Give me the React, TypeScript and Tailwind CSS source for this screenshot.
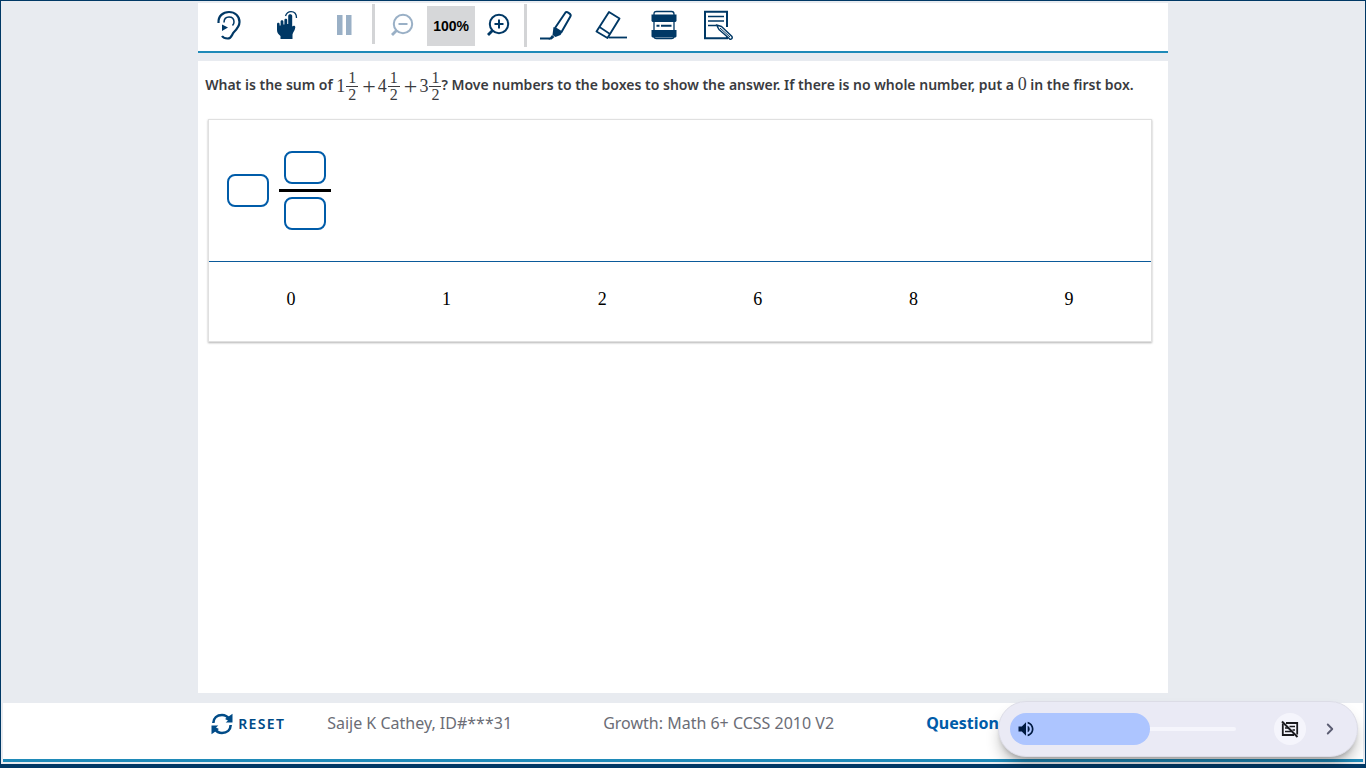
import { useState } from "react";
import type { ReactNode } from "react";
import { ChevronRight } from "lucide-react";
import { MdVolumeUp } from "react-icons/md";

const choices = ["0", "1", "2", "6", "8", "9"];

function EarIcon() {
  return (
    <svg width="32" height="32" viewBox="0 0 32 32" fill="none" stroke="currentColor">
      <path d="M5.500 14C5 7 10 3 16 3s10.500 4 10.500 10c0 4.500-2.500 7-5.500 10-2.500 2.500-2 6.500-6.500 6.500-3 0-4.500-1-5.500-2.500" strokeWidth="2.200" />
      <path d="M11 13.500c0-3.500 2-5.500 5-5.500s5 2 5 5c0 1.500-.5 2.500-1.500 3.500" strokeWidth="1.500" />
      <path d="M9 15.500l6 3-6 3.500z" fill="currentColor" stroke="none" />
    </svg>
  );
}

function TouchIcon() {
  return (
    <svg width="32" height="32" viewBox="0 0 32 32" fill="none">
      <path
        fill="currentColor"
        d="M6 15c0-1.700 2.600-1.700 2.600 0v1.500h1v-4c0-1.800 2.800-1.800 2.800 0v3h1V11c0-1.800 2.800-1.800 2.800 0v4h1V7c0-2.300 4-2.300 4 0v10.500c1-1.200 3.300-1.200 3.100.8-.2 2.500-1.500 4-2.300 5.700l-.5 1.500v4.500H9.500v-3C7.500 25.500 6 24 6 21z"
      />
      <path d="M14.500 7C15.500 4 17.500 2.700 20 2.700c3.500 0 5.500 2.500 5.500 6.300" stroke="currentColor" strokeWidth="1.300" />
    </svg>
  );
}

function PauseIcon() {
  return (
    <svg width="32" height="32" viewBox="0 0 32 32" fill="currentColor">
      <path d="M9 6h5.500v20H9zM18 6h5.500v20H18z" />
    </svg>
  );
}

function ZoomIcon({ plus = false }: { plus?: boolean }) {
  return (
    <svg width="32" height="32" viewBox="0 0 32 32" fill="none" stroke="currentColor">
      <circle cx="17" cy="15" r="9.200" strokeWidth="2" />
      <path d="M11 21l-5 5" strokeWidth="2.800" />
      <path d={plus ? "M12.500 15h9M17 10.500v9" : "M12.500 15h9"} strokeWidth="2" />
    </svg>
  );
}

function HighlighterIcon() {
  return (
    <svg width="36" height="32" viewBox="0 0 36 32" fill="none" stroke="currentColor">
      <path d="M2 29.500h10" strokeWidth="2" />
      <path d="M14 26l2.500 2-3 2.500h-3z" fill="currentColor" stroke="none" />
      <path d="M15.500 18l8.500 5.500-1.500 2.500-5 2-3-2z" fill="currentColor" stroke="none" />
      <path d="M17 19L27.500 3.500c1.200-1.300 6.200 1.800 5 3.700L23.500 23z" strokeWidth="2" strokeLinejoin="round" />
    </svg>
  );
}

function EraserIcon() {
  return (
    <svg width="36" height="32" viewBox="0 0 36 32" fill="none" stroke="currentColor" strokeLinejoin="round">
      <path d="M16 3l10.500 6.500L14.500 29 3.500 22.500z" strokeWidth="1.900" />
      <path d="M6.500 18l10.500 7" strokeWidth="1.600" />
      <path d="M16 28.500h18" strokeWidth="1.800" />
    </svg>
  );
}

function LineReaderIcon() {
  return (
    <svg width="32" height="32" viewBox="0 0 32 32" fill="none" stroke="currentColor">
      <path d="M6 5c0-1.800.7-2.500 2.500-2.500h15c1.800 0 2.500.7 2.500 2.500v22.500c0 1.500-.7 2-2.500 2h-15c-1.800 0-2.500-.5-2.500-2z" strokeWidth="1.300" />
      <path d="M3.500 5.500h25V12l-1 1h-23l-1-1zM3.500 21h25v6.500l-1 1h-23l-1-1z" fill="currentColor" stroke="none" />
      <path d="M8.500 16.700h3M13 16.700h10.500" strokeWidth="2" />
    </svg>
  );
}

function NotepadIcon() {
  return (
    <svg width="32" height="32" viewBox="0 0 32 32" fill="none" stroke="currentColor">
      <path d="M25 18V2.800H3v26.400h22v-3" strokeWidth="2" />
      <path d="M6 7.500h16M6 12h16M6 16.500h8" strokeWidth="1.600" />
      <path d="M14.500 16l5 1.500 10.500 10c1 1.800-1 3.500-2.500 2.300L17 20.500z" fill="white" strokeWidth="1.500" strokeLinejoin="round" />
      <path d="M18 19l10 9" strokeWidth="1" />
    </svg>
  );
}

function ResetIcon() {
  return (
    <svg width="22" height="22" viewBox="0 0 22 22" fill="none">
      <path d="M2.300 10C2.500 5 6 2 11 2c3 0 5.500 1.500 7 4M19.700 12c-.2 5-3.700 8-8.700 8-3 0-5.500-1.500-7-4" stroke="currentColor" strokeWidth="2.600" />
      <path d="M21.500.8v8.700h-6.800l2.300-2-3-1.500zM.5 21.200v-8.700h6.800l-2.300 2 3 1.500z" fill="currentColor" />
    </svg>
  );
}

function CaptionsOffIcon() {
  return (
    <svg width="20" height="20" viewBox="0 0 20 20" fill="none" stroke="currentColor">
      <path d="M6 4h11.200v11.500M14 16H2.800V4.500" strokeWidth="1.800" />
      <path d="M5 9h3M9.500 7.500H15M5 12.500h6M12.500 11H15" strokeWidth="1.500" />
      <path d="M2 2.500l15.500 15.500" strokeWidth="2" />
    </svg>
  );
}

function ToolButton({ label, disabled, className = "w-14", children }: {
  label: string;
  disabled?: boolean;
  className?: string;
  children: ReactNode;
}) {
  return (
    <button
      type="button"
      aria-label={label}
      disabled={disabled}
      className={`flex h-11 items-center justify-center text-[#003865] disabled:text-[#9ab0c6] ${className}`}
    >
      {children}
    </button>
  );
}

function MixedNumber({ whole }: { whole: string }) {
  return (
    <span className="inline-flex items-center align-middle font-['Liberation_Serif',serif] text-lg font-normal leading-5">
      <span>{whole}</span>
      <span className="ml-px flex w-3 flex-col items-center text-base leading-4">
        <span>1</span>
        <span className="h-px w-full bg-[#3a3b40]" />
        <span>2</span>
      </span>
    </span>
  );
}

function Plus() {
  return (
    <span className="mr-0.5 ml-1 inline-block align-middle font-['Liberation_Serif',serif] text-2xl font-normal leading-5">
      +
    </span>
  );
}

function DropBox({ label }: { label: string }) {
  return (
    <button type="button" aria-label={label} className="h-[33px] w-[42px] rounded-lg border-2 border-[#005ca9] bg-white" />
  );
}

function VolumePanel() {
  const [volume, setVolume] = useState(62);

  return (
    <div className="fixed right-2 bottom-[11px] flex h-14 w-[360px] items-center rounded-full border border-[#dcdce6] bg-[#eaeaf5] pl-[11px] shadow-lg shadow-black/30">
      <div className="relative flex h-8 w-[226px] items-center">
        <span className="h-1 w-full rounded-full bg-[#f5f5fc]" />
        <span className="absolute left-0 flex h-8 items-center rounded-full bg-[#adc5ff] pl-1.5 text-[#001a41]" style={{ width: `${volume}%` }}>
          <MdVolumeUp size={20} />
        </span>
        <input
          type="range"
          aria-label="Volume"
          min={15}
          max={100}
          value={volume}
          onChange={(e) => setVolume(Number(e.target.value))}
          className="absolute inset-0 h-full w-full cursor-pointer opacity-0"
        />
      </div>
      <button type="button" aria-label="Captions off" className="ml-[38px] flex size-8 items-center justify-center rounded-full bg-[#f5f5fc] text-[#1b1b1f]">
        <CaptionsOffIcon />
      </button>
      <button type="button" aria-label="Expand" className="ml-3 flex size-6 items-center justify-center text-[#5b5d72]">
        <ChevronRight size={18} strokeWidth={2.5} />
      </button>
    </div>
  );
}

export default function App() {
  return (
    <div className="flex min-h-screen flex-col border border-b-4 border-[#003865] bg-[#e8ebf0] px-0.5 pt-0.5 font-['Noto_Sans',sans-serif]">
      <header className="mx-auto flex h-[50px] w-[71.3%] items-start border-b-2 border-[#1f8ab8] bg-white pl-[3px]">
        <ToolButton label="Text to speech"><EarIcon /></ToolButton>
        <ToolButton label="Touch mode" className="ml-0.5 w-14"><TouchIcon /></ToolButton>
        <ToolButton label="Pause" disabled className="w-[57px]"><PauseIcon /></ToolButton>
        <span className="mt-px h-10 w-[3px] bg-[#d3d4d6]" />
        <ToolButton label="Zoom out" disabled className="w-[52px] pl-0.5"><ZoomIcon /></ToolButton>
        <span className="mt-[3px] flex h-10 w-12 items-center justify-center bg-[#d6d7d9] font-['Liberation_Sans',sans-serif] text-sm font-bold text-black">
          100%
        </span>
        <ToolButton label="Zoom in" className="w-[49px] pr-1"><ZoomIcon plus /></ToolButton>
        <span className="mt-px mr-px h-[43px] w-[3px] bg-[#d3d4d6]" />
        <ToolButton label="Highlighter"><HighlighterIcon /></ToolButton>
        <ToolButton label="Eraser" className="w-[54px]"><EraserIcon /></ToolButton>
        <ToolButton label="Line reader" className="w-[52px]"><LineReaderIcon /></ToolButton>
        <ToolButton label="Notepad"><NotepadIcon /></ToolButton>
      </header>

      <main className="mx-auto mt-2 mb-2.5 w-[71.3%] flex-1 bg-white pr-4 pl-[7px]">
        <p className="mt-1.5 min-h-9 text-sm font-semibold leading-9 text-[#3a3b40]">
          What is the sum of <MixedNumber whole="1" />
          <Plus />
          <MixedNumber whole="4" />
          <Plus />
          <MixedNumber whole="3" />? Move numbers to the boxes to show the answer. If there is no whole number, put a{" "}
          <span className="font-['Liberation_Serif',serif] text-lg font-normal leading-5">0</span> in the first box.
        </p>

        <section className="mt-4 ml-[3px] border border-[#e0e0e0] shadow-[0_1px_2px_rgba(0,0,0,0.3)]">
          <div className="flex h-[142px] items-center border-b border-[#0b5a9a] pl-[18px]">
            <DropBox label="Whole number" />
            <div className="ml-2.5 flex w-[52px] flex-col items-center">
              <DropBox label="Numerator" />
              <span className="my-[5px] h-[3px] w-full bg-black" />
              <DropBox label="Denominator" />
            </div>
          </div>
          <div className="grid h-[79px] grid-cols-6 items-center px-1 font-['Liberation_Serif',serif] text-lg text-black">
            {choices.map((n) => (
              <button key={n} type="button" className="h-full pb-1.5">{n}</button>
            ))}
          </div>
        </section>
      </main>

      <footer className="mb-0.5 h-[59px] border-b-[3px] border-[#1f8ab8] bg-white">
        <div className="mx-auto flex h-10 w-[71.3%] items-center pl-[13px] text-base whitespace-nowrap text-[#6b6d76]">
          <button type="button" className="mt-0.5 flex w-[116px] items-center gap-[5px] text-sm font-semibold tracking-widest text-[#004b87]">
            <ResetIcon />
            RESET
          </button>
          <span className="w-[276px]">Saije K Cathey, ID#***31</span>
          <span className="w-[323px]">Growth: Math 6+ CCSS 2010 V2</span>
          <span className="font-bold text-[#005ca9]">Question</span>
        </div>
      </footer>

      <VolumePanel />
    </div>
  );
}
